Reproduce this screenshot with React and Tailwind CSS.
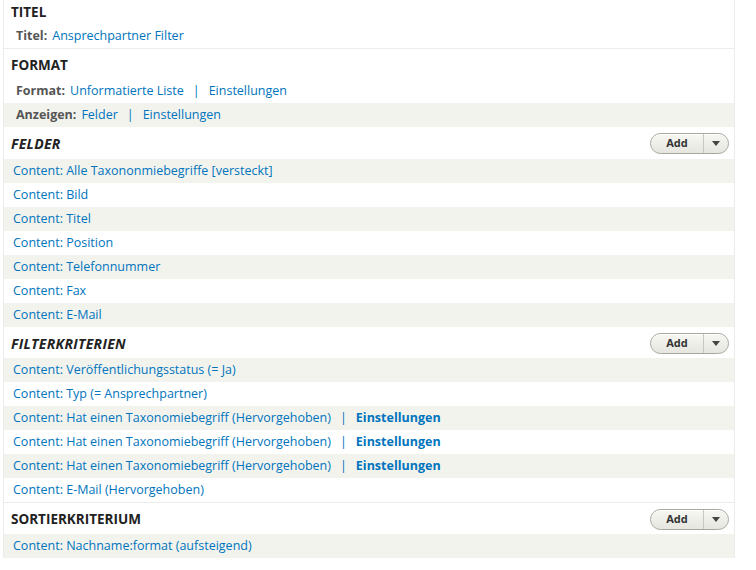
import React from "react";

const font = { fontFamily: '"Open Sans", "Liberation Sans", sans-serif' };

function AddButton() {
  return (
    <div className="flex h-[21px] items-stretch rounded-full border border-[#a8a8a0] bg-gradient-to-b from-[#f7f7f3] to-[#e6e6df] text-[11px] font-bold text-[#333] shadow-[inset_0_1px_0_#fff]">
      <span className="flex w-[52px] items-center justify-center">Add</span>
      <span className="flex w-[25px] items-center justify-center border-l border-[#c8c8c0]">
        <svg width="8" height="5" viewBox="0 0 8 5">
          <path d="M0 0h8L4 5z" fill="#444" />
        </svg>
      </span>
    </div>
  );
}

function Header({ title, italic, add, className = "" }) {
  return (
    <div className={`flex items-center justify-between pl-[7px] pr-[5px] ${className}`}>
      <h3
        className={`font-bold uppercase text-[#222] ${
          italic ? "text-[14px] italic tracking-[0.3px]" : "text-[13.5px]"
        }`}
      >
        {title}
      </h3>
      {add && <AddButton />}
    </div>
  );
}

function Row({ children, gray, extra }) {
  return (
    <div className={`flex h-6 items-center pl-[9px] text-[12.5px] text-[#0074bd] ${gray ? "bg-[#f3f3ee]" : ""}`}>
      <span>{children}</span>
      {extra && (
        <>
          <span className="mx-[9px]">|</span>
          <span className="font-bold">{extra}</span>
        </>
      )}
    </div>
  );
}

function LabelRow({ label, value, extra, gray }) {
  return (
    <div className={`flex h-6 items-center pl-[12px] pt-[1px] text-[12.5px] ${gray ? "bg-[#f3f3ee]" : ""}`}>
      <span className="mr-[5px] text-[12.5px] font-bold text-[#555]">{label}</span>
      <span className="text-[#0074bd]">{value}</span>
      {extra && (
        <>
          <span className="mx-[9px] text-[#0074bd]">|</span>
          <span className="text-[#0074bd]">{extra}</span>
        </>
      )}
    </div>
  );
}

const felder = [
  "Content: Alle Taxononmiebegriffe [versteckt]",
  "Content: Bild",
  "Content: Titel",
  "Content: Position",
  "Content: Telefonnummer",
  "Content: Fax",
  "Content: E-Mail",
];

const filter = [
  ["Content: Veröffentlichungsstatus (= Ja)"],
  ["Content: Typ (= Ansprechpartner)"],
  ["Content: Hat einen Taxonomiebegriff (Hervorgehoben)", "Einstellungen"],
  ["Content: Hat einen Taxonomiebegriff (Hervorgehoben)", "Einstellungen"],
  ["Content: Hat einen Taxonomiebegriff (Hervorgehoben)", "Einstellungen"],
  ["Content: E-Mail (Hervorgehoben)"],
];

export default function App() {
  return (
    <div className="h-[570px] w-[756px] bg-white" style={font}>
      <div className="ml-[3px] w-[732px] border-x border-[#ececec] bg-white">
        <Header title="Titel" className="h-6" />
        <LabelRow label="Titel:" value="Ansprechpartner Filter" />
        <div className="border-t border-[#ececec]" />
        <Header title="Format" className="h-[30px] pt-[3px]" />
        <LabelRow label="Format:" value="Unformatierte Liste" extra="Einstellungen" />
        <LabelRow label="Anzeigen:" value="Felder" extra="Einstellungen" gray />

        <Header title="Felder" italic add className="h-8 pt-[1px]" />
        {felder.map((f, i) => (
          <Row key={i} gray={i % 2 === 0}>{f}</Row>
        ))}

        <Header title="Filterkriterien" italic add className="h-[31px] pt-[1px]" />
        {filter.map(([f, e], i) => (
          <Row key={i} gray={i % 2 === 0} extra={e}>{f}</Row>
        ))}
        <div className="border-t border-[#ececec]" />

        <Header title="Sortierkriterium" add className="h-[31px] pt-[1px]" />
        <Row gray>Content: Nachname:format (aufsteigend)</Row>
      </div>
    </div>
  );
}
